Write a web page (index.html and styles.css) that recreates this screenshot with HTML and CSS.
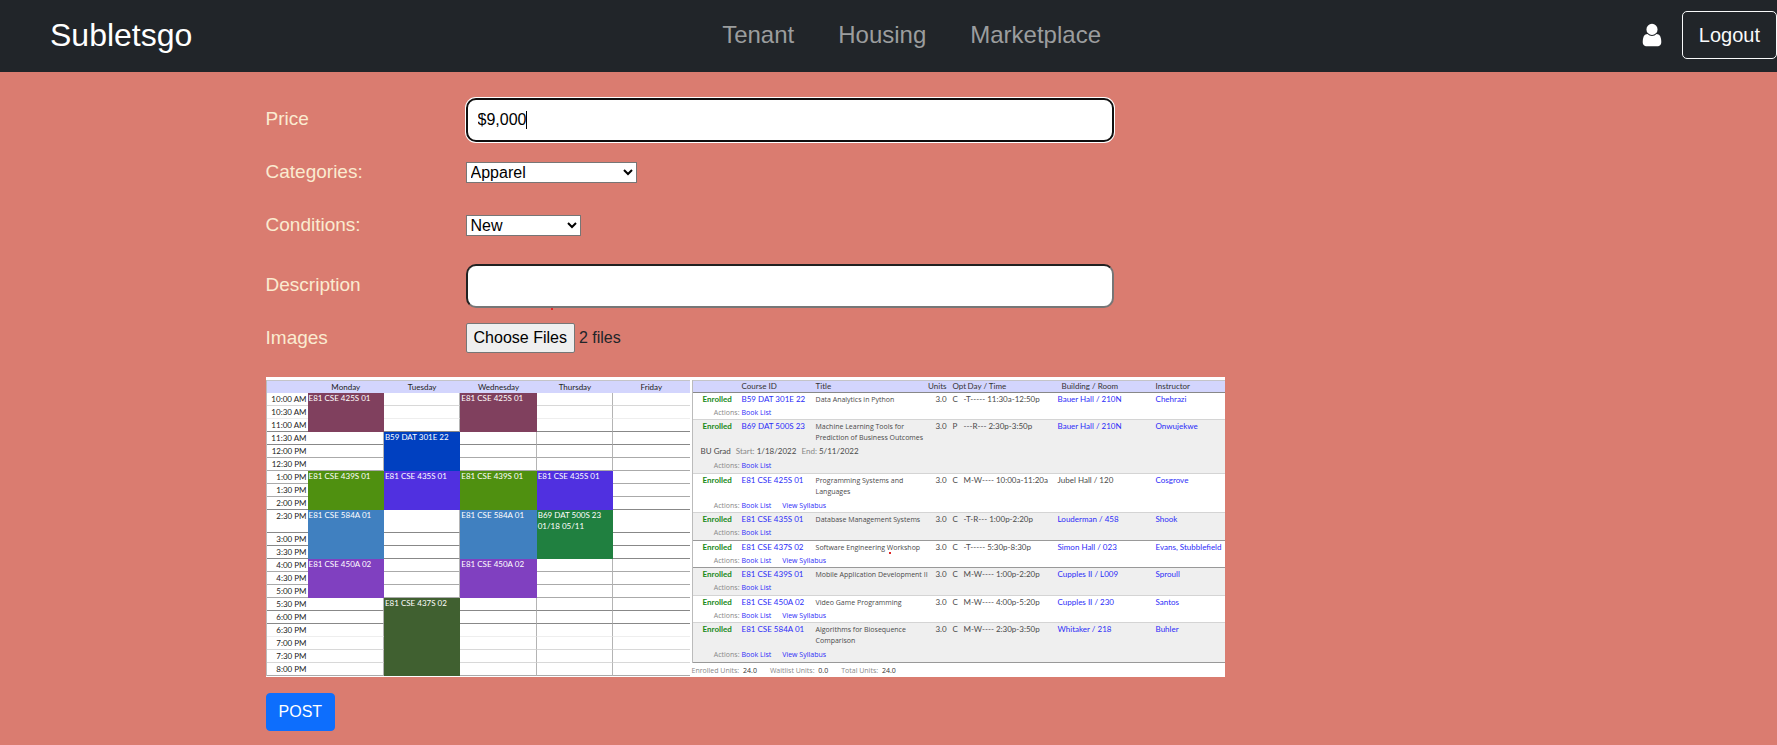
FILE: index.html
```html
<!DOCTYPE html>
<html lang="en">
<head>
<meta charset="utf-8">
<title>Subletsgo</title>
<link rel="stylesheet" href="styles.css">
</head>
<body>
<header class="navbar">
  <a class="brand" href="#">Subletsgo</a>
  <nav class="nav-links">
    <a href="#">Tenant</a>
    <a href="#">Housing</a>
    <a href="#">Marketplace</a>
  </nav>
  <div class="account">
    <a class="profile" href="#" aria-label="Profile">
      <svg class="user-icon" viewBox="0 0 1792 1792" aria-hidden="true"><path fill="currentColor" d="M1536 1399q0 109-62.5 187t-150.5 78h-854q-88 0-150.5-78t-62.5-187q0-85 8.5-160.5t31.5-152 58.5-131 94-89 134.5-34.5q131 128 313 128t313-128q76 0 134.5 34.5t94 89 58.5 131 31.5 152 8.5 160.5zm-256-887q0 159-112.5 271.5t-271.5 112.5-271.5-112.5-112.5-271.5 112.5-271.5 271.5-112.5 271.5 112.5 112.5 271.5z"/></svg>
    </a>
    <button class="logout" type="button">Logout</button>
  </div>
</header>
<main class="page">
  <form class="post-form">
    <div class="field">
      <label for="price">Price</label>
      <div class="control wide"><input class="text-input active" id="price" type="text" value="$9,000"><span class="caret"></span></div>
    </div>
    <div class="field">
      <label for="category">Categories:</label>
      <div class="control"><select class="category" id="category"><option>Apparel</option><option>Furniture</option><option>Electronics</option></select></div>
    </div>
    <div class="field">
      <label for="condition">Conditions:</label>
      <div class="control"><select class="condition" id="condition"><option>New</option><option>Used</option></select></div>
    </div>
    <div class="field spaced">
      <label for="description">Description</label>
      <div class="control wide"><input class="text-input" id="description" type="text"><span class="speck below-input"></span></div>
    </div>
    <div class="field">
      <label for="images">Images</label>
      <div class="control"><input class="file-input" id="images" type="file" multiple></div>
    </div>

    <div class="previews">
      <table class="schedule">
        <colgroup><col class="time-col"><col><col><col><col><col></colgroup>
        <thead><tr><th></th><th>Monday</th><th>Tuesday</th><th>Wednesday</th><th>Thursday</th><th>Friday</th></tr></thead>
        <tbody>
          <tr class="light"><th>10:00 AM</th><td rowspan="3" class="plum">E81 CSE 425S 01</td><td></td><td rowspan="3" class="plum">E81 CSE 425S 01</td><td></td><td></td></tr>
          <tr class="faint"><th>10:30 AM</th><td></td><td></td><td></td></tr>
          <tr class="dark"><th>11:00 AM</th><td></td><td></td><td></td></tr>
          <tr class="dark"><th>11:30 AM</th><td></td><td rowspan="3" class="blue">B59 DAT 301E 22</td><td></td><td></td><td></td></tr>
          <tr><th>12:00 PM</th><td></td><td></td><td></td><td></td></tr>
          <tr><th>12:30 PM</th><td></td><td></td><td></td><td></td></tr>
          <tr><th>1:00 PM</th><td rowspan="3" class="green">E81 CSE 439S 01</td><td rowspan="3" class="violet">E81 CSE 435S 01</td><td rowspan="3" class="green">E81 CSE 439S 01</td><td rowspan="3" class="violet">E81 CSE 435S 01</td><td></td></tr>
          <tr><th>1:30 PM</th><td></td></tr>
          <tr class="dark"><th>2:00 PM</th><td></td></tr>
          <tr class="dark tall"><th>2:30 PM</th><td rowspan="3" class="sky">E81 CSE 584A 01</td><td></td><td rowspan="3" class="sky">E81 CSE 584A 01</td><td rowspan="3" class="emerald">B69 DAT 500S 23<br>01/18 05/11</td><td></td></tr>
          <tr class="dark"><th>3:00 PM</th><td></td><td></td></tr>
          <tr class="dark"><th>3:30 PM</th><td></td><td></td></tr>
          <tr><th>4:00 PM</th><td rowspan="3" class="purple">E81 CSE 450A 02</td><td></td><td rowspan="3" class="purple">E81 CSE 450A 02</td><td></td><td></td></tr>
          <tr><th>4:30 PM</th><td></td><td></td><td></td></tr>
          <tr><th>5:00 PM</th><td></td><td></td><td></td></tr>
          <tr class="dark"><th>5:30 PM</th><td></td><td rowspan="6" class="olive">E81 CSE 437S 02</td><td></td><td></td><td></td></tr>
          <tr class="dark"><th>6:00 PM</th><td></td><td></td><td></td><td></td></tr>
          <tr class="faint"><th>6:30 PM</th><td></td><td></td><td></td><td></td></tr>
          <tr class="light"><th>7:00 PM</th><td></td><td></td><td></td><td></td></tr>
          <tr class="light"><th>7:30 PM</th><td></td><td></td><td></td><td></td></tr>
          <tr><th>8:00 PM</th><td></td><td></td><td></td><td></td></tr>
        </tbody>
      </table>

      <div class="enrollment">
        <table class="courses">
          <colgroup><col class="c-status"><col class="c-id"><col class="c-title"><col class="c-units"><col class="c-opt"><col class="c-time"><col class="c-room"><col></colgroup>
          <thead><tr><th></th><th>Course ID</th><th>Title</th><th class="num">Units</th><th>Opt</th><th class="inset">Day / Time</th><th class="inset">Building / Room</th><th>Instructor</th></tr></thead>
          <tbody>
            <tr><td class="status">Enrolled</td><td><a href="#">B59 DAT 301E 22</a></td><td class="title">Data Analytics in Python</td><td class="num">3.0</td><td>C</td><td>-T----- 11:30a-12:50p</td><td><a href="#">Bauer Hall / 210N</a></td><td><a href="#">Chehrazi</a></td></tr>
            <tr class="actions"><td>Actions:</td><td colspan="7"><a href="#">Book List</a></td></tr>
          </tbody>
          <tbody class="alt">
            <tr><td class="status">Enrolled</td><td><a href="#">B69 DAT 500S 23</a></td><td class="title long">Machine Learning Tools for<br>Prediction of Business Outcomes</td><td class="num">3.0</td><td>P</td><td>---R--- 2:30p-3:50p</td><td><a href="#">Bauer Hall / 210N</a></td><td><a href="#">Onwujekwe</a></td></tr>
            <tr class="term"><td colspan="8"><b>BU Grad</b> <span>Start: <b>1/18/2022</b></span> <span>End: <b>5/11/2022</b></span></td></tr>
            <tr class="actions"><td>Actions:</td><td colspan="7"><a href="#">Book List</a></td></tr>
          </tbody>
          <tbody>
            <tr><td class="status">Enrolled</td><td><a href="#">E81 CSE 425S 01</a></td><td class="title long">Programming Systems and<br>Languages</td><td class="num">3.0</td><td>C</td><td>M-W---- 10:00a-11:20a</td><td>Jubel Hall / 120</td><td><a href="#">Cosgrove</a></td></tr>
            <tr class="actions"><td>Actions:</td><td colspan="7"><a href="#">Book List</a><a href="#">View Syllabus</a></td></tr>
          </tbody>
          <tbody class="alt strong">
            <tr><td class="status">Enrolled</td><td><a href="#">E81 CSE 435S 01</a></td><td class="title">Database Management Systems</td><td class="num">3.0</td><td>C</td><td>-T-R--- 1:00p-2:20p</td><td><a href="#">Louderman / 458</a></td><td><a href="#">Shook</a></td></tr>
            <tr class="actions"><td>Actions:</td><td colspan="7"><a href="#">Book List</a></td></tr>
          </tbody>
          <tbody class="strong">
            <tr><td class="status">Enrolled</td><td><a href="#">E81 CSE 437S 02</a></td><td class="title marked">Software Engineering Workshop<span class="speck below-title"></span></td><td class="num">3.0</td><td>C</td><td>-T----- 5:30p-8:30p</td><td><a href="#">Simon Hall / 023</a></td><td><a href="#">Evans, Stubblefield</a></td></tr>
            <tr class="actions"><td>Actions:</td><td colspan="7"><a href="#">Book List</a><a href="#">View Syllabus</a></td></tr>
          </tbody>
          <tbody class="alt">
            <tr><td class="status">Enrolled</td><td><a href="#">E81 CSE 439S 01</a></td><td class="title">Mobile Application Development II</td><td class="num">3.0</td><td>C</td><td>M-W---- 1:00p-2:20p</td><td><a href="#">Cupples II / L009</a></td><td><a href="#">Sproull</a></td></tr>
            <tr class="actions"><td>Actions:</td><td colspan="7"><a href="#">Book List</a></td></tr>
          </tbody>
          <tbody>
            <tr><td class="status">Enrolled</td><td><a href="#">E81 CSE 450A 02</a></td><td class="title">Video Game Programming</td><td class="num">3.0</td><td>C</td><td>M-W---- 4:00p-5:20p</td><td><a href="#">Cupples II / 230</a></td><td><a href="#">Santos</a></td></tr>
            <tr class="actions"><td>Actions:</td><td colspan="7"><a href="#">Book List</a><a href="#">View Syllabus</a></td></tr>
          </tbody>
          <tbody class="alt strong">
            <tr><td class="status">Enrolled</td><td><a href="#">E81 CSE 584A 01</a></td><td class="title long">Algorithms for Biosequence<br>Comparison</td><td class="num">3.0</td><td>C</td><td>M-W---- 2:30p-3:50p</td><td><a href="#">Whitaker / 218</a></td><td><a href="#">Buhler</a></td></tr>
            <tr class="actions"><td>Actions:</td><td colspan="7"><a href="#">Book List</a><a href="#">View Syllabus</a></td></tr>
          </tbody>
        </table>
        <p class="totals"><span>Enrolled Units: <b>24.0</b></span><span>Waitlist Units: <b>0.0</b></span><span>Total Units: <b>24.0</b></span></p>
      </div>
    </div>

    <button class="post" type="button">POST</button>
  </form>
</main>
<script src="form.js"></script>
</body>
</html>
```

FILE: styles.css
```css
* { box-sizing: border-box; }
body {
  margin: 0;
  min-height: 100vh;
  background: #da7c70;
  color: #212529;
  font-family: "Liberation Sans", Arial, sans-serif;
  font-size: 16px;
}
a { text-decoration: none; }
button, input, select { font: inherit; }

/* Navigation bar */
.navbar {
  display: flex;
  justify-content: space-between;
  align-items: center;
  padding: 11px 0 13px 50px;
  background: #212529;
}
.brand { color: #fff; font-size: 32px; line-height: 40px; }
.nav-links { display: flex; gap: 44px; font-size: 24px; line-height: 32px; }
.nav-links a { color: #9b9d9e; }
.account { display: flex; align-items: center; gap: 9px; }
.profile { display: flex; padding: 0 8px; color: #fff; }
.user-icon { width: 26px; height: 26px; }
.logout {
  padding: 8px 16px;
  border: 1px solid #f8f9fa;
  border-radius: 5px;
  background: transparent;
  color: #f8f9fa;
  font-size: 20px;
  line-height: 30px;
}

/* Form */
.page { padding: 26px 0 12px calc(15% - 1px); }
.post-form { display: flex; flex-direction: column; align-items: flex-start; gap: 9px; }
.field {
  display: grid;
  grid-template-columns: 200px minmax(0, 648px);
  align-items: center;
  width: 100%;
  min-height: 44px;
}
.spaced { margin-top: 7px; }
.field label { padding-bottom: 2px; color: #faebd0; font-size: 19px; line-height: 24px; }
.control { position: relative; display: flex; align-items: center; }
.text-input {
  width: 100%;
  height: 44px;
  padding: 0 10px;
  border: 2px solid;
  border-color: #212121 #767676 #767676 #212121;
  border-radius: 10px;
  background: #fff;
  color: #000;
  outline: none;
}
.text-input.active { border-color: #101010; box-shadow: 0 0 0 1px #fff; }
.caret { position: absolute; left: 60px; top: 13px; width: 1px; height: 18px; background: #000; }
select {
  height: 21px;
  margin-bottom: 2px;
  padding: 0;
  border: 1px solid #767676;
  border-radius: 0;
  background-color: #fff;
  color: #000;
}
.category { width: 171px; }
.condition { width: 115px; }
.file-input { width: 100%; margin-bottom: 2px; color: #212529; }
.file-input::file-selector-button {
  height: 30px;
  margin: 0 4px 0 0;
  padding: 0 7px;
  border: 1px solid #767676;
  border-radius: 2px;
  background: #efefef;
  color: #000;
  font: inherit;
}
.speck { position: absolute; width: 2px; height: 2px; background: #e02828; }
.below-input { left: 85px; top: 44px; }
.below-title { left: 73px; top: 11px; }
.post {
  margin-top: 7px;
  padding: 6px 12px;
  border: 1px solid #0d6efd;
  border-radius: 4px;
  background: #0d6efd;
  color: #fff;
  line-height: 24px;
}

/* Uploaded picture previews */
.previews {
  display: grid;
  grid-template-columns: 424px 533px;
  gap: 2px;
  height: 300px;
  margin-top: 7px;
  padding-top: 3px;
  background: #fff;
  font-family: Lato, "Open Sans", sans-serif;
  font-size: 8px;
  line-height: 11px;
}
.previews table { width: 100%; table-layout: fixed; border-spacing: 0; }
.previews th, .previews td { padding: 0; font-weight: 400; vertical-align: top; }

.schedule { height: 296px; border-left: 1px solid #bbb; color: #222; white-space: nowrap; }
.time-col { width: 41px; }
.schedule thead th {
  height: 13px;
  border-top: 1px solid #c4c4c8;
  background: #d3d5fd;
  line-height: 12px;
}
.schedule tbody th { height: 13px; padding: 1px 1px 0 0; text-align: right; }
.schedule tbody th, .schedule td { border-bottom: 1px solid #aaa; }
.schedule td { border-right: 1px solid #b4b4b4; }
.schedule td:last-child { border-right: 0; }
.schedule .faint > :not([rowspan]) { border-bottom-color: #eee; }
.schedule .light > :not([rowspan]) { border-bottom-color: #d8d8d8; }
.schedule .dark > :not([rowspan]) { border-bottom-color: #888; }
.schedule .tall th { height: 23px; }
.schedule td[rowspan] { border: 0; padding-left: 1px; color: #fff; }
.plum { background: #80405e; }
.blue { background: #0040c0; }
.green { background: #4f9010; }
.violet { background: #5030e0; }
.sky { background: #4080c0; }
.emerald { background: #208040; }
.purple { background: #8040c0; }
.olive { background: #406030; }

.courses { border-left: 1px solid #bbb; color: #4a4a4a; white-space: nowrap; }
.c-status { width: 49px; }
.c-id { width: 74px; }
.c-title { width: 112px; }
.c-units { width: 25px; }
.c-opt { width: 11px; }
.c-time { width: 94px; }
.c-room { width: 98px; }
.courses thead th {
  height: 13px;
  border-top: 1px solid #c4c4c8;
  border-bottom: 1px solid #888;
  background: #d3d5fd;
  color: #333;
  text-align: left;
}
.courses thead .inset { padding-left: 4px; }
.courses tbody td { padding-top: 1px; height: 13px; }
.courses .num, .courses thead .num { padding-right: 6px; text-align: right; }
.courses .status { padding-left: 10px; color: #188a18; font-weight: 700; }
.courses .title, .courses .actions td, .totals { font-family: "Open Sans", sans-serif; font-size: 7px; }
.courses .long { padding-bottom: 2px; }
.courses a { color: #2c2cf8; }
.courses .actions td { height: 14px; border-bottom: 1px solid #d4d4d4; }
.courses .actions td:first-child { padding-right: 2px; color: #888; text-align: right; }
.courses .actions a { margin-right: 11px; }
.courses .alt { background: #efefef; }
.courses .alt .actions td { height: 15px; }
.courses .strong .actions td { border-bottom-color: #999; }
.courses .term td { height: 14px; padding-left: 8px; color: #888; }
.courses .term b { color: #4a4a4a; font-weight: 400; }
.courses .term span { margin-left: 3px; }
.marked { position: relative; }
.totals { display: flex; gap: 13px; margin: 2px 0 0; color: #888; }
.totals b { margin-left: 2px; color: #333; font-weight: 400; }
```

FILE: form.js
```js
// Fill the file picker with the two attached pictures.
const picker = document.getElementById("images");
const attached = new DataTransfer();
attached.items.add(new File([""], "schedule.png", { type: "image/png" }));
attached.items.add(new File([""], "courses.png", { type: "image/png" }));
picker.files = attached.files;
```
